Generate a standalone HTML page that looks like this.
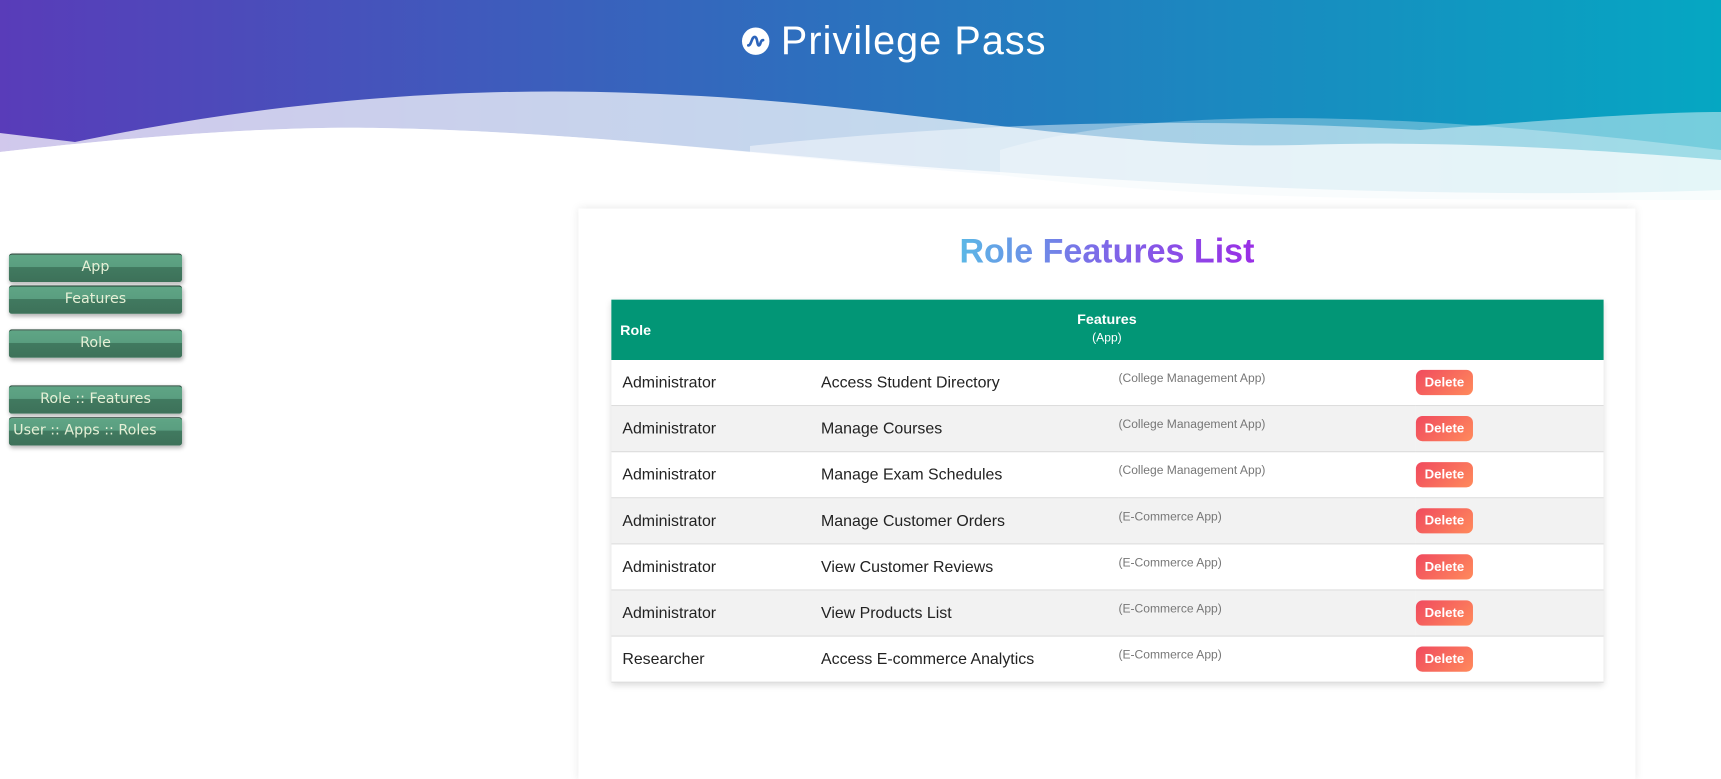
<!DOCTYPE html>
<html><head><meta charset="utf-8"><style>
body{margin:0;width:1721px;height:698px;overflow:hidden;background:#fff;font-family:"Liberation Sans",sans-serif;position:relative}
.hdr{position:absolute;left:0;top:0;width:1721px;height:200px}
.wrap{position:absolute;left:0;top:0;width:1568px;height:636px;transform:scale(1.0976);transform-origin:0 0}
.title{position:absolute;top:16px;left:0;padding-left:62px;box-sizing:border-box;width:1568px;text-align:center;color:#fff;font-size:36px;letter-spacing:1px}
.logo{display:inline-block;width:25px;height:25px;border-radius:50%;background:#fff;vertical-align:-1px;margin-right:10px;position:relative}
.btn{position:absolute;left:8px;width:158px;height:25px;border-top:1px solid #1e3d2f;border-radius:3px;background:linear-gradient(#5fa585 0,#5a9e80 45%,#417a60 46%,#3d7159 100%);color:#e6f0d6;font-family:"DejaVu Sans",sans-serif;font-size:13px;text-align:center;line-height:24px;box-shadow:1px 2px 4px rgba(0,0,0,.3)}
.card{position:absolute;left:527px;top:190px;width:963px;height:520px;background:#fff;box-shadow:0 0 8px rgba(0,0,0,.1)}
h1{position:absolute;top:211px;margin:0;text-align:center;font-size:31px;font-weight:bold}
h1 span{background:linear-gradient(90deg,#5bb8e6,#7b6ee8 45%,#9a2ee6);-webkit-background-clip:text;background-clip:text;color:transparent}
table{position:absolute;left:557px;top:273px;width:904px;border-collapse:collapse;box-shadow:0 2px 6px rgba(0,0,0,.15);table-layout:fixed}
th{background:#029676;color:#fff;height:55px;font-size:13px;padding:0}
td{height:41px;border-bottom:1px solid #ddd;font-size:14.5px;color:#222;padding:0;vertical-align:middle}
tr:nth-child(odd) td{background:#f2f2f2}
tr:nth-child(2) td{background:#fff}
.app span{font-size:11px;color:#777;position:relative;top:-5px}
.del{display:inline-block;width:52px;height:23px;line-height:23px;text-align:center;border-radius:6px;background:linear-gradient(135deg,#f04a5e,#ff8a5c);color:#fff;font-size:12px;font-weight:bold;vertical-align:middle}
</style></head><body>
<svg class="hdr" width="1721" height="200" viewBox="0 0 1721 200">
<defs><linearGradient id="g" x1="0" x2="1"><stop offset="0" stop-color="#593cb9"/><stop offset=".5" stop-color="#2b72be"/><stop offset="1" stop-color="#05a7c2"/></linearGradient></defs>
<rect width="1721" height="200" fill="url(#g)"/>
<path d="M1000,150 C1150,105 1400,110 1721,150 V200 H1000Z" fill="#fff" opacity=".3"/>
<path d="M0,133 L75,142 C300,95 500,85 680,95 C900,105 1100,150 1300,145 C1450,140 1600,150 1721,160 V200 H0Z" fill="#fff" opacity=".72"/>
<path d="M750,146 C1000,120 1200,118 1420,130 C1550,120 1650,112 1721,112 V200 H750Z" fill="#fff" opacity=".45"/>
<path d="M0,152 C150,135 280,126 380,128 C600,132 800,160 1000,172 C1250,190 1500,198 1721,190 V200 H0Z" fill="#fff" opacity=".75"/>
<path d="M0,152 C150,135 280,126 380,128 C600,132 800,160 1000,175 C1200,200 1400,200 1721,200 V200 H0Z" fill="#fff"/>
</svg>
<div class="wrap">
<div class="title"><span class="logo"><svg width="25" height="25" viewBox="0 0 26 26" style="position:absolute;left:0;top:0"><path d="M6,17 C9,17 9,9 12,9 C15,9 14,17 16,17 C18,17 17,12 20,12" stroke="#2c64bb" stroke-width="2.5" fill="none" stroke-linecap="round"/></svg></span>Privilege Pass</div>
<div class="btn" style="top:231px">App</div>
<div class="btn" style="top:260px">Features</div>
<div class="btn" style="top:300px">Role</div>
<div class="btn" style="top:351px">Role :: Features</div>
<div class="btn" style="top:380px;text-align:left;padding-left:4px;width:154px">User :: Apps :: Roles</div>
<div class="card"></div>
<h1 style="left:527px;width:963px"><span>Role Features List</span></h1>
<table>
<colgroup><col style="width:191px"><col style="width:271px"><col style="width:271px"><col></colgroup>
<tr><th style="text-align:left;padding-left:8px">Role</th><th colspan="3" style="padding-right:192px">Features<br><span style="font-weight:normal;font-size:11px;line-height:20px">(App)</span></th></tr>
<tr><td style="padding-left:10px">Administrator</td><td>Access Student Directory</td><td class="app"><span>(College Management App)</span></td><td><span class="del">Delete</span></td></tr>
<tr><td style="padding-left:10px">Administrator</td><td>Manage Courses</td><td class="app"><span>(College Management App)</span></td><td><span class="del">Delete</span></td></tr>
<tr><td style="padding-left:10px">Administrator</td><td>Manage Exam Schedules</td><td class="app"><span>(College Management App)</span></td><td><span class="del">Delete</span></td></tr>
<tr><td style="padding-left:10px">Administrator</td><td>Manage Customer Orders</td><td class="app"><span>(E-Commerce App)</span></td><td><span class="del">Delete</span></td></tr>
<tr><td style="padding-left:10px">Administrator</td><td>View Customer Reviews</td><td class="app"><span>(E-Commerce App)</span></td><td><span class="del">Delete</span></td></tr>
<tr><td style="padding-left:10px">Administrator</td><td>View Products List</td><td class="app"><span>(E-Commerce App)</span></td><td><span class="del">Delete</span></td></tr>
<tr><td style="padding-left:10px">Researcher</td><td>Access E-commerce Analytics</td><td class="app"><span>(E-Commerce App)</span></td><td><span class="del">Delete</span></td></tr>
</table>
</div>
</body></html>
